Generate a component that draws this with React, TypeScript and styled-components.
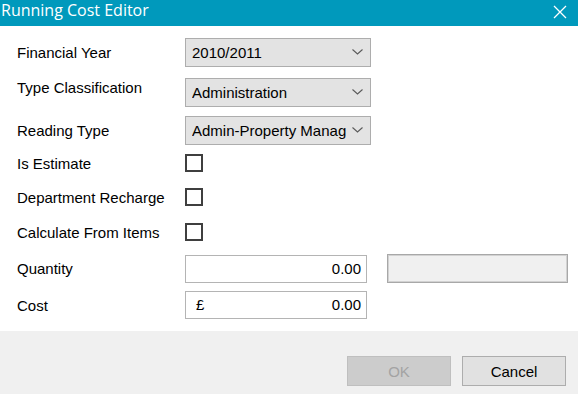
import styled, { createGlobalStyle } from "styled-components"

const GlobalStyle = createGlobalStyle`
    html, body {
        margin: 0;
        padding: 0;
        background: #ffffff;
    }
    * {
        box-sizing: border-box;
    }
`

const comboOptions = [
    { label: "Financial Year", value: "2010/2011", mt: 12, raise: 0 },
    { label: "Type Classification", value: "Administration", mt: 11, raise: 5 },
    { label: "Reading Type", value: "Admin-Property Manag", mt: 9, raise: 0 },
]

const checkOptions = [
    { label: "Is Estimate", mt: 9 },
    { label: "Department Recharge", mt: 16 },
    { label: "Calculate From Items", mt: 17 },
]

export default function App() {
    return (
        <>
            <GlobalStyle />
            <Dialog>
                <TitleBar>
                    <Title>Running Cost Editor</Title>
                    <CloseButton>
                        <svg width="14" height="14" viewBox="0 0 14 14">
                            <path d="M1 1 L13 13 M13 1 L1 13" stroke="#ffffff" strokeWidth="1.3" fill="none" />
                        </svg>
                    </CloseButton>
                </TitleBar>

                <Body>
                    {comboOptions.map(item =>
                        <Row key={item.label} $mt={item.mt}>
                            <Label $raise={item.raise}>{item.label}</Label>
                            <Combo>
                                <span>{item.value}</span>
                                <svg width="11" height="6" viewBox="0 0 11 6">
                                    <path d="M0.5 0.5 L5.5 5 L10.5 0.5" stroke="#5a5a5a" strokeWidth="1.1" fill="none" />
                                </svg>
                            </Combo>
                        </Row>
                    )}

                    {checkOptions.map(item =>
                        <Row key={item.label} $mt={item.mt}>
                            <Label $raise={0}>{item.label}</Label>
                            <CheckBox />
                        </Row>
                    )}

                    <Row $mt={13}>
                        <Label $raise={0}>Quantity</Label>
                        <TextBox>
                            <span />
                            <span>0.00</span>
                        </TextBox>
                        <DisabledBox />
                    </Row>
                    <Row $mt={8}>
                        <Label $raise={0}>Cost</Label>
                        <TextBox>
                            <Currency>£</Currency>
                            <span>0.00</span>
                        </TextBox>
                    </Row>
                </Body>

                <Footer>
                    <Button $disabled>OK</Button>
                    <Button $disabled={false}>Cancel</Button>
                </Footer>
            </Dialog>
        </>
    )
}

const Dialog = styled.div`
    width: 578px;
    height: 394px;
    display: flex;
    flex-direction: column;
    font-family: "Liberation Sans", Arial, sans-serif;
    font-size: 15px;
    color: #000000;
    overflow: hidden;
`

const TitleBar = styled.div`
    height: 26px;
    flex: none;
    background: #0099bc;
    display: flex;
    align-items: flex-start;
    justify-content: space-between;
    padding: 0 11px 0 1px;
`

const Title = styled.span`
    font-family: "Open Sans", "Noto Sans", sans-serif;
    font-size: 16px;
    line-height: 20px;
    color: #ffffff;
`

const CloseButton = styled.div`
    display: flex;
    padding-top: 5px;
`

const Body = styled.div`
    flex: 1;
    background: #ffffff;
    display: flex;
    flex-direction: column;
    padding-left: 17px;
`

const Row = styled.div<{ $mt: number }>`
    display: flex;
    align-items: center;
    margin-top: ${props => props.$mt}px;
`

const Label = styled.span<{ $raise: number }>`
    width: 168px;
    flex: none;
    white-space: nowrap;
    position: relative;
    top: ${props => -props.$raise}px;
`

const Combo = styled.div`
    width: 186px;
    height: 29px;
    background: #e3e3e3;
    border: 1px solid #adadad;
    display: flex;
    align-items: center;
    justify-content: space-between;
    padding: 0 7px 1px 6px;
    overflow: hidden;

    & > span {
        white-space: nowrap;
        overflow: hidden;
        margin-right: 6px;
    }

    & > svg {
        flex: none;
    }
`

const CheckBox = styled.div`
    width: 18px;
    height: 18px;
    border: 2px solid #3f3f3f;
    background: #ffffff;
`

const TextBox = styled.div`
    width: 182px;
    height: 28px;
    border: 1px solid #b4b4b4;
    background: #ffffff;
    display: flex;
    align-items: center;
    justify-content: space-between;
    padding: 0 5px 1px 0;
`

const Currency = styled.span`
    margin-left: 10px;
`

const DisabledBox = styled.div`
    width: 181px;
    height: 29px;
    margin-left: 20px;
    background: #f0f0f0;
    border: 1px solid #a8a8a8;
    box-shadow: inset 0 0 0 1px #d2d2d2;
`

const Footer = styled.div`
    height: 63px;
    flex: none;
    background: #f0f0f0;
    display: flex;
    justify-content: flex-end;
    align-items: flex-start;
    gap: 11px;
    padding: 25px 12px 0 0;
`

const Button = styled.div<{ $disabled: boolean }>`
    width: 104px;
    height: 30px;
    display: flex;
    align-items: center;
    justify-content: center;
    background: ${props => props.$disabled ? "#cccccc" : "#e1e1e1"};
    border: 1px solid ${props => props.$disabled ? "#bfbfbf" : "#adadad"};
    color: ${props => props.$disabled ? "#a3a3a3" : "#000000"};
`
